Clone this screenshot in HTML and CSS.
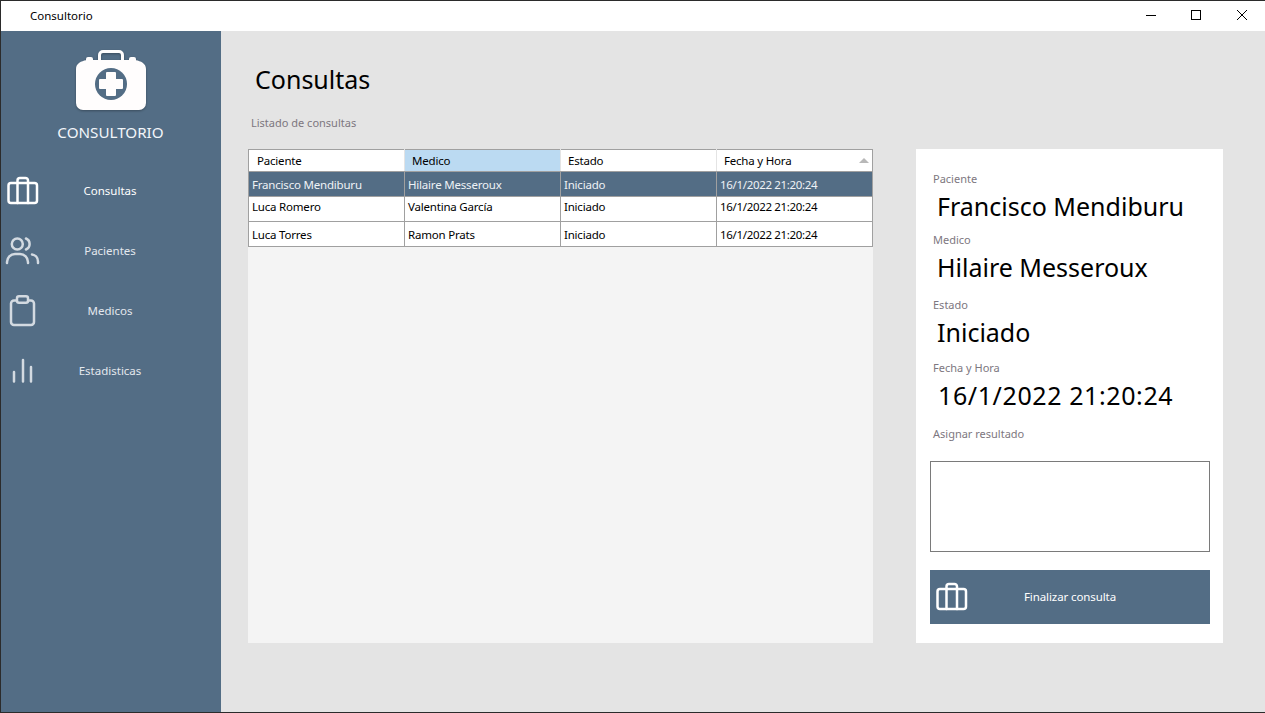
FILE: index.html
```html
<!DOCTYPE html>
<html lang="es">
<head>
    <meta charset="UTF-8">
    <title>Consultorio</title>
    <link rel="stylesheet" href="styles.css">
</head>
<body>
    <div class="window">
        <!-- Title bar -->
        <header class="titlebar">
            <span class="titlebar-name">Consultorio</span>
            <div class="window-buttons">
                <svg width="46" height="30" viewBox="0 0 46 30"><path d="M19 14.500h10" stroke="#000" fill="none"/></svg>
                <svg width="46" height="30" viewBox="0 0 46 30"><rect x="18.500" y="9.500" width="9" height="9" stroke="#000" fill="none"/></svg>
                <svg width="46" height="30" viewBox="0 0 46 30"><path d="M18 9l10 10M28 9l-10 10" stroke="#000" fill="none"/></svg>
            </div>
        </header>

        <div class="app">
            <!-- Sidebar -->
            <aside class="sidebar">
                <div class="brand">
                    <svg class="brand-icon" width="72" height="62" viewBox="0 0 72 62">
                        <path d="M24.500 11V5a3.500 3.500 0 0 1 3.500-3.500h16a3.500 3.500 0 0 1 3.500 3.500v6" fill="none" stroke="#fffdfd" stroke-width="3"/>
                        <path d="M11 9a2 2 0 0 1 2-2h3a2 2 0 0 1 2 2v1h36V9a2 2 0 0 1 2-2h3a2 2 0 0 1 2 2v1.200c4.500.8 10 3 10 8.800v34a7 7 0 0 1-7 7H8a7 7 0 0 1-7-7V19c0-5.800 5.500-8 10-8.800z" fill="#fffdfd"/>
                        <circle cx="36" cy="34" r="16" fill="#536d85"/>
                        <path d="M32 22h8a1 1 0 0 1 1 1v6h6a1 1 0 0 1 1 1v8a1 1 0 0 1-1 1h-6v6a1 1 0 0 1-1 1h-8a1 1 0 0 1-1-1v-6h-6a1 1 0 0 1-1-1v-8a1 1 0 0 1 1-1h6v-6a1 1 0 0 1 1-1z" fill="#fffdfd"/>
                    </svg>
                    <div class="brand-name">CONSULTORIO</div>
                </div>
                <nav class="nav">
                    <a class="nav-item nav-item-active">
                        <svg class="nav-icon" width="32" height="30" viewBox="0 0 32 30"><use href="#icon-case"/></svg>
                        <span>Consultas</span>
                    </a>
                    <a class="nav-item">
                        <svg class="nav-icon nav-icon-people" width="36" height="30" viewBox="0 0 36 30">
                            <circle cx="12.300" cy="9" r="5.500"/>
                            <path d="M2 28v-1a8 8 0 0 1 8-8h5a8 8 0 0 1 8 8v1"/>
                            <path d="M21 3.500a6 6 0 0 1 0 11M27 19.500a7 7 0 0 1 6 7v1.500"/>
                        </svg>
                        <span>Pacientes</span>
                    </a>
                    <a class="nav-item">
                        <svg class="nav-icon" width="30" height="32" viewBox="0 0 30 32">
                            <rect x="4" y="5.500" width="23" height="24.500" rx="3"/>
                            <rect class="clip" x="10" y="1.250" width="11" height="6.500" rx="2"/>
                        </svg>
                        <span>Medicos</span>
                    </a>
                    <a class="nav-item">
                        <svg class="nav-icon" width="28" height="28" viewBox="0 0 28 28">
                            <path d="M7 17v9.500M16 5v21.500M24 12v14.500"/>
                        </svg>
                        <span>Estadisticas</span>
                    </a>
                </nav>
            </aside>

            <!-- Main content -->
            <main class="main">
                <h1>Consultas</h1>
                <p class="subtitle">Listado de consultas</p>
                <div class="content">
                    <div class="grid">
                        <table>
                            <thead>
                                <tr>
                                    <th>Paciente</th>
                                    <th class="th-hover">Medico</th>
                                    <th>Estado</th>
                                    <th class="th-sorted">Fecha y Hora<span class="sort-arrow"></span></th>
                                </tr>
                            </thead>
                            <tbody>
                                <tr class="row-selected">
                                    <td>Francisco Mendiburu</td>
                                    <td>Hilaire Messeroux</td>
                                    <td>Iniciado</td>
                                    <td class="td-date">16/1/2022 21:20:24</td>
                                </tr>
                                <tr class="row-top">
                                    <td>Luca Romero</td>
                                    <td>Valentina García</td>
                                    <td>Iniciado</td>
                                    <td class="td-date">16/1/2022 21:20:24</td>
                                </tr>
                                <tr>
                                    <td>Luca Torres</td>
                                    <td>Ramon Prats</td>
                                    <td>Iniciado</td>
                                    <td class="td-date">16/1/2022 21:20:24</td>
                                </tr>
                            </tbody>
                        </table>
                    </div>

                    <section class="detail">
                        <div class="field field-paciente">
                            <label>Paciente</label>
                            <div class="field-value">Francisco Mendiburu</div>
                        </div>
                        <div class="field field-medico">
                            <label>Medico</label>
                            <div class="field-value">Hilaire Messeroux</div>
                        </div>
                        <div class="field field-estado">
                            <label>Estado</label>
                            <div class="field-value">Iniciado</div>
                        </div>
                        <div class="field field-fecha">
                            <label>Fecha y Hora</label>
                            <div class="field-value field-value-date">16/1/2022 21:20:24</div>
                        </div>
                        <label class="result-label">Asignar resultado</label>
                        <textarea class="result-box"></textarea>
                        <button class="finish-button">
                            <svg class="nav-icon" width="32" height="30" viewBox="0 0 32 30"><use href="#icon-case"/></svg>
                            <span>Finalizar consulta</span>
                        </button>
                    </section>
                </div>
            </main>
        </div>
    </div>

    <svg width="0" height="0" class="icon-defs">
        <defs>
            <g id="icon-case">
                <rect x="1.500" y="8" width="28.500" height="20" rx="2.500"/>
                <path d="M10.500 28V5.500a2.500 2.500 0 0 1 2.500-2.500h5.500a2.500 2.500 0 0 1 2.500 2.500V28"/>
            </g>
        </defs>
    </svg>
</body>
</html>
```

FILE: styles.css
```css
* {
    box-sizing: border-box;
}

body {
    margin: 0;
    font-family: "Noto Sans", "Open Sans", sans-serif;
    background-color: #e4e4e4;
    overflow: hidden;
}

.window {
    width: 1265px;
    height: 713px;
    display: flex;
    flex-direction: column;
    border-top: 1px solid #2b2b2b;
    border-left: 1px solid #2b2b2b;
    border-bottom: 1px solid #2b2b2b;
}

/* Title bar */
.titlebar {
    height: 30px;
    flex-shrink: 0;
    display: flex;
    justify-content: space-between;
    align-items: center;
    background-color: #fff;
    padding-left: 29px;
    font-size: 11.500px;
    color: #000;
}

.titlebar-name {
    margin-bottom: 2px;
}

.window-buttons {
    display: flex;
    height: 30px;
}

.app {
    flex: 1;
    display: flex;
    min-height: 0;
}

/* Sidebar */
.sidebar {
    width: 220px;
    flex-shrink: 0;
    background-color: #536d85;
    color: #fff;
}

.brand {
    display: flex;
    flex-direction: column;
    align-items: center;
    padding-top: 19px;
}

.brand-icon {
    filter: drop-shadow(0 1px 1px rgba(0, 0, 0, 0.3));
}

.brand-name {
    margin-top: 9px;
    margin-right: 1px;
    font-size: 15.200px;
    line-height: 22px;
    color: #f2f6fa;
}

.nav {
    margin-top: 17px;
    display: flex;
    flex-direction: column;
}

.nav-item {
    position: relative;
    height: 60px;
    display: flex;
    justify-content: center;
    align-items: center;
    padding-right: 2px;
    font-size: 11.500px;
    color: #e3e8ee;
}

.nav-item-active {
    color: #fff;
}

.nav-icon {
    position: absolute;
    left: 6px;
    top: 15px;
    fill: none;
    stroke: #d3dae1;
    stroke-width: 2.500;
    stroke-linecap: round;
    stroke-linejoin: round;
}

.nav-icon-people {
    left: 4px;
}

.nav-icon .clip {
    fill: #536d85;
}

.nav-item-active .nav-icon,
.finish-button .nav-icon {
    stroke: #fff;
}

.icon-defs {
    position: absolute;
}

/* Main content */
.main {
    flex: 1;
    padding: 32px 42px 0 27px;
}

h1 {
    margin: 0 0 0 7px;
    font-size: 25px;
    line-height: 32px;
    font-weight: 400;
    color: #000;
}

.subtitle {
    margin: 20px 0 0 3px;
    font-size: 11px;
    line-height: 16px;
    color: #7d7780;
}

.content {
    margin-top: 18px;
    display: flex;
    justify-content: space-between;
    height: 494px;
}

/* Data grid */
.grid {
    width: 625px;
    background-color: #f4f4f4;
}

table {
    width: 625px;
    border-collapse: collapse;
    table-layout: fixed;
    font-size: 11.500px;
    letter-spacing: -0.200px;
    color: #000;
    background-color: #fff;
}

th, td {
    border: 1px solid #a0a0a0;
    text-align: left;
    font-weight: 400;
    padding: 0 0 0 3px;
    white-space: nowrap;
    overflow: hidden;
}

th {
    height: 22px;
    padding-left: 7px;
    border-left-color: #e4e4e4;
    border-right-color: #e4e4e4;
}

th:first-child {
    padding-left: 8px;
    border-left-color: #a0a0a0;
}

th:last-child {
    border-right-color: #a0a0a0;
    position: relative;
}

.th-hover {
    background-color: #bbdaf2;
}

td {
    height: 25px;
}

.td-date {
    letter-spacing: -0.330px;
}

.row-selected td {
    background-color: #536d85;
    color: #eef2f6;
}

.row-top td {
    padding-bottom: 6px;
}

.sort-arrow {
    position: absolute;
    right: 3px;
    top: 8px;
    width: 0;
    height: 0;
    border-left: 5px solid transparent;
    border-right: 5px solid transparent;
    border-bottom: 5px solid #b8b8b8;
}

/* Detail panel */
.detail {
    width: 307px;
    background-color: #fff;
    padding: 22px 13px 0 14px;
    display: flex;
    flex-direction: column;
}

.field label,
.result-label {
    display: block;
    font-size: 11px;
    line-height: 16px;
    color: #7d7780;
    margin-left: 3px;
}

.field-value {
    margin-top: 2px;
    margin-left: 7px;
    font-size: 25px;
    line-height: 34px;
    color: #000;
}

.field-value-date {
    margin-left: 8px;
    letter-spacing: 0.600px;
}

.field-paciente {
    height: 61px;
}

.field-medico {
    height: 65px;
}

.field-estado {
    height: 63px;
}

.field-fecha {
    height: 66px;
}

.result-box {
    margin-top: 19px;
    width: 280px;
    height: 91px;
    border: 1px solid #7a7a7a;
    background-color: #fff;
    resize: none;
    display: block;
}

.finish-button {
    position: relative;
    margin-top: 18px;
    width: 280px;
    height: 54px;
    border: 0;
    background-color: #536d85;
    color: #fff;
    font-family: inherit;
    font-size: 11.500px;
    letter-spacing: -0.100px;
    padding: 0 0 2px;
}

.finish-button .nav-icon {
    top: 11px;
}
```
